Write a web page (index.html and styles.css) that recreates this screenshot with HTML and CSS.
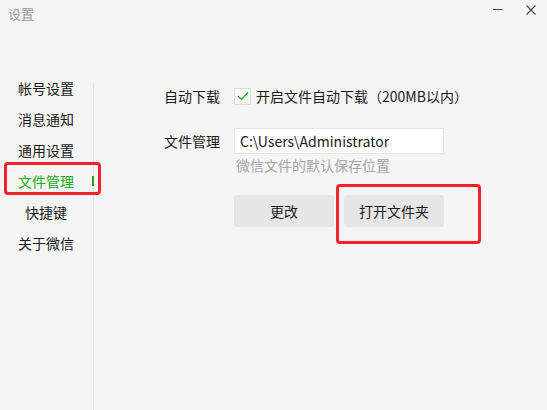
FILE: index.html
```html
<!DOCTYPE html>
<html lang="zh-CN">
<head>
<meta charset="utf-8">
<title>设置</title>
<link rel="stylesheet" href="styles.css">
</head>
<body>
<div class="window">
  <div class="titlebar">
    <span class="title">设置</span>
    <div class="controls">
      <svg class="ctl-min" width="10" height="10" viewBox="0 0 10 10"><path d="M0 4.5H9.5" stroke="#444" stroke-width="1"/></svg>
      <svg class="ctl-close" width="10" height="10" viewBox="0 0 10 10"><path d="M0.5 0.5L9.5 9.5M9.5 0.5L0.5 9.5" stroke="#444" stroke-width="1.1"/></svg>
    </div>
  </div>
  <div class="main">
    <nav class="sidebar">
      <div class="nav-item">帐号设置</div>
      <div class="nav-item">消息通知</div>
      <div class="nav-item">通用设置</div>
      <div class="nav-item active">文件管理<span class="indicator"></span><span class="mark mark-nav"></span></div>
      <div class="nav-item">快捷键</div>
      <div class="nav-item">关于微信</div>
    </nav>
    <div class="divider"></div>
    <section class="content">
      <div class="row row-download">
        <span class="label">自动下载</span>
        <span class="checkbox">
          <svg width="12" height="10" viewBox="0 0 12 10"><path d="M1 5L4.5 8.5L11 1.5" fill="none" stroke="#1aad19" stroke-width="1.2"/></svg>
        </span>
        <span class="check-text">开启文件自动下载（200MB以内）</span>
      </div>
      <div class="row row-path">
        <span class="label">文件管理</span>
        <div class="path-box">C:\Users\Administrator</div>
      </div>
      <div class="hint">微信文件的默认保存位置</div>
      <div class="buttons">
        <button class="btn">更改</button>
        <button class="btn btn-open">打开文件夹<span class="mark mark-btn"></span></button>
      </div>
    </section>
  </div>
</div>
</body>
</html>
```
FILE: styles.css
```css
* { box-sizing: border-box; }
html, body {
  margin: 0;
  padding: 0;
  background: #f5f5f5;
  font-family: "Microsoft YaHei", "Noto Sans CJK SC", "Noto Sans", sans-serif;
  color: #1a1a1a;
}
.window {
  width: 547px;
  height: 410px;
  display: flex;
  flex-direction: column;
  overflow: hidden;
}
.titlebar {
  height: 70px;
  display: flex;
  justify-content: space-between;
  align-items: flex-start;
  padding: 4px 11px 0 8px;
}
.title {
  font-size: 13px;
  line-height: 19px;
  color: #9a9a9a;
}
.controls {
  display: flex;
  gap: 23px;
  padding-top: 1px;
}
.ctl-min, .ctl-close { display: block; }
.main {
  flex: 1;
  display: flex;
}
.sidebar {
  width: 93px;
  padding-top: 3px;
  display: flex;
  flex-direction: column;
}
.nav-item {
  position: relative;
  height: 31px;
  line-height: 31px;
  font-size: 14px;
  text-align: center;
  padding-right: 1px;
}
.nav-item.active { color: #1aad19; }
.indicator {
  position: absolute;
  left: 92px;
  top: 10px;
  width: 2px;
  height: 10px;
  background: #1aad19;
  z-index: 2;
}
.mark {
  position: absolute;
  border: 3px solid #f5222d;
  border-radius: 4px;
  pointer-events: none;
}
.mark-nav {
  left: 4px;
  top: -4px;
  width: 97px;
  height: 33px;
}
.divider {
  width: 1px;
  margin-top: 13px;
  background: #e3e3e3;
}
.content {
  flex: 1;
  padding: 17px 0 0 70px;
  display: flex;
  flex-direction: column;
}
.row {
  display: flex;
  align-items: center;
}
.label {
  width: 70px;
  font-size: 14px;
}
.row-download { height: 18px; }
.checkbox {
  width: 17px;
  height: 17px;
  border: 1px solid #dcdcdc;
  background: #f9f9f9;
  display: flex;
  align-items: center;
  justify-content: center;
  margin-right: 5px;
}
.check-text { font-size: 14px; }
.row-path { margin-top: 23px; }
.path-box {
  width: 210px;
  height: 26px;
  border: 1px solid #e6e6e6;
  background: #fff;
  font-size: 14px;
  line-height: 24px;
  padding-left: 5px;
}
.hint {
  margin: 1px 0 0 72px;
  font-size: 14px;
  line-height: 20px;
  color: #a5a5a5;
}
.buttons {
  display: flex;
  gap: 10px;
  margin: 20px 0 0 70px;
}
.btn {
  position: relative;
  width: 100px;
  height: 32px;
  border: none;
  border-radius: 3px;
  background: #e6e6e6;
  font-family: inherit;
  font-size: 14px;
  color: #1a1a1a;
  padding: 0;
}
.mark-btn {
  left: -8px;
  top: -11px;
  width: 145px;
  height: 60px;
}
```
